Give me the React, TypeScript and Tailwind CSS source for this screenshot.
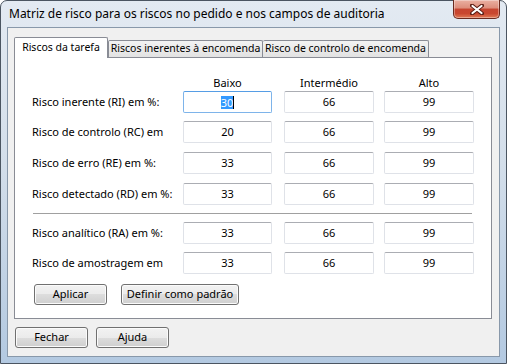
import React from "react";

const COLS = ["Baixo", "Intermédio", "Alto"];

type Row = { label: string; values: string[] };

const TOP_ROWS: Row[] = [
  { label: "Risco inerente (RI) em %:", values: ["30", "66", "99"] },
  { label: "Risco de controlo (RC) em", values: ["20", "66", "99"] },
  { label: "Risco de erro (RE) em %:", values: ["33", "66", "99"] },
  { label: "Risco detectado (RD) em %:", values: ["33", "66", "99"] },
];

const BOTTOM_ROWS: Row[] = [
  { label: "Risco analítico (RA) em %:", values: ["33", "66", "99"] },
  { label: "Risco de amostragem em", values: ["33", "66", "99"] },
];

// widths / gaps of the three value columns, taken off the screenshot
const COL_W = ["w-[89px]", "w-[90px] ml-[12px]", "w-[90px] ml-[10px]"];

const BTN =
  "h-[21px] rounded-[3px] border border-[#707070] bg-[linear-gradient(#f2f2f2_0%,#ebebeb_50%,#dddddd_50%,#cfcfcf_100%)] shadow-[inset_0_0_0_1px_#fbfbfb] text-[11px] text-black whitespace-nowrap flex items-center justify-center";

function Field({ value, focused, cls }: { value: string; focused?: boolean; cls: string }) {
  return (
    <div
      className={`${cls} h-[22px] flex items-center justify-center rounded-[2px] bg-white border ${
        focused
          ? "border-[#7eb4ea] border-t-[#569de5]"
          : "border-[#dfe2e8] border-t-[#abadb3]"
      }`}
    >
      {focused ? (
        <span className="flex items-center">
          <span className="bg-[#3399ff] text-white leading-[13px]">{value}</span>
          <span className="w-[1px] h-[13px] bg-black" />
        </span>
      ) : (
        <span className="leading-[14px]">{value}</span>
      )}
    </div>
  );
}

function RiskRow({ row, first, mt }: { row: Row; first?: boolean; mt: string }) {
  return (
    <div className={`flex items-center h-[22px] ${mt}`}>
      <div className="w-[151px] whitespace-nowrap overflow-hidden">{row.label}</div>
      {row.values.map((v, i) => (
        <Field key={i} value={v} focused={first && i === 0} cls={COL_W[i]} />
      ))}
    </div>
  );
}

export default function App() {
  return (
    <div className="w-[507px] h-[364px] font-['Noto_Sans',sans-serif] text-[11px] text-black">
      <div className="w-full h-full flex flex-col rounded-t-[7px] border border-[#4b5561] bg-[linear-gradient(180deg,#e3eaf2_0%,#d3deea_45%,#b3c9e1_100%)] px-[6px] pb-[6px]">
        {/* title bar */}
        <div className="h-[26px] flex items-start justify-between">
          <span className="pl-[2px] pt-[5px] text-[12px] leading-[16px] whitespace-nowrap">
            Matriz de risco para os riscos no pedido e nos campos de auditoria
          </span>
          <div className="-mt-[1px] w-[47px] h-[19px] flex items-center justify-center rounded-b-[5px] border border-t-0 border-[#6a2a1f] bg-[linear-gradient(#eab0a2_0%,#dd8d7b_45%,#c64530_50%,#c9472f_75%,#e07a55_100%)] shadow-[inset_0_0_0_1px_rgba(255,255,255,0.35)]">
            <svg width="14" height="11" viewBox="0 0 14 11">
              <path d="M2 1.5 L12 9.5 M12 1.5 L2 9.5" stroke="#5a1d14" strokeWidth="4" strokeLinecap="round" />
              <path d="M2.5 2 L11.5 9 M11.5 2 L2.5 9" stroke="#ffffff" strokeWidth="2.2" strokeLinecap="round" />
            </svg>
          </div>
        </div>

        {/* client area */}
        <div className="flex-1 flex flex-col border border-[#8898aa] bg-[#f0f0f0] pl-[6px] pr-[7px]">
          {/* tabs */}
          <div className="mt-[9px] h-[20px] flex items-end text-[10.5px]">
            <div className="relative z-10 -mb-[1px] h-[21px] w-[94px] flex items-start justify-center pt-[2px] rounded-t-[2px] border border-b-0 border-[#898c95] bg-white whitespace-nowrap leading-[15px]">
              Riscos da tarefa
            </div>
            <div className="h-[17px] w-[155px] flex items-center justify-center rounded-t-[2px] border border-b-0 border-[#898c95] bg-[linear-gradient(#f3f3f3,#e2e2e2)] whitespace-nowrap">
              Riscos inerentes à encomenda
            </div>
            <div className="h-[17px] w-[166px] flex items-center justify-center rounded-t-[2px] border border-b-0 border-l-0 border-[#898c95] bg-[linear-gradient(#f3f3f3,#e2e2e2)] whitespace-nowrap">
              Risco de controlo de encomenda
            </div>
          </div>

          {/* tab panel */}
          <div className="h-[262px] border border-[#898c95] bg-white pl-[17px] pt-[16px] flex flex-col">
            <div className="flex items-center h-[17px]">
              <div className="w-[151px]" />
              {COLS.map((c, i) => (
                <div key={c} className={`${COL_W[i]} text-center leading-[16px]`}>
                  {c}
                </div>
              ))}
            </div>

            <RiskRow row={TOP_ROWS[0]} first mt="mt-0" />
            <RiskRow row={TOP_ROWS[1]} mt="mt-[8px]" />
            <RiskRow row={TOP_ROWS[2]} mt="mt-[9px]" />
            <RiskRow row={TOP_ROWS[3]} mt="mt-[9px]" />

            <div className="mt-[8px] ml-[1px] w-[439px] h-[1px] bg-[#a0a0a0]" />

            <RiskRow row={BOTTOM_ROWS[0]} mt="mt-[8px]" />
            <RiskRow row={BOTTOM_ROWS[1]} mt="mt-[8px]" />

            <div className="mt-[10px] ml-[2px] flex gap-[14px]">
              <button className={`${BTN} w-[73px]`}>Aplicar</button>
              <button className={`${BTN} w-[118px]`}>Definir como padrão</button>
            </div>
          </div>

          {/* footer buttons */}
          <div className="mt-[8px] ml-[1px] flex gap-[8px]">
            <button className={`${BTN} w-[73px]`}>Fechar</button>
            <button className={`${BTN} w-[73px]`}>Ajuda</button>
          </div>
        </div>
      </div>
    </div>
  );
}
